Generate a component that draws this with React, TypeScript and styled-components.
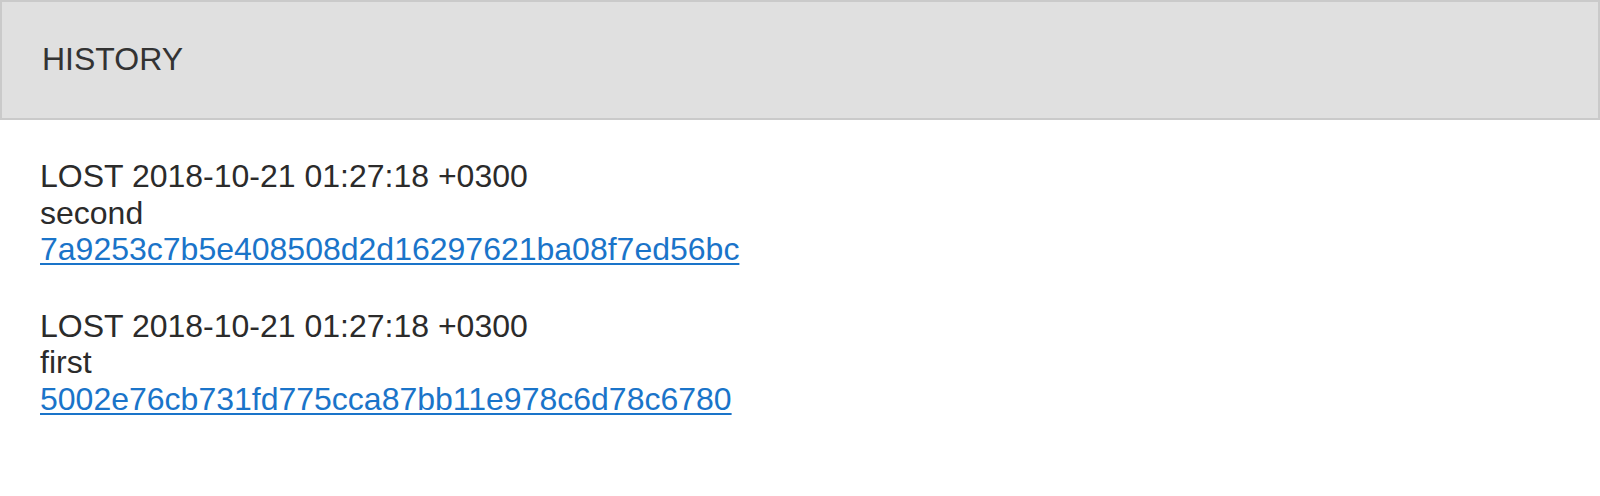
import React from "react";
import styled, { createGlobalStyle } from "styled-components";

const GlobalStyle = createGlobalStyle`
  html, body {
    margin: 0;
    padding: 0;
    background: #ffffff;
  }
  body {
    font-family: "Liberation Sans", Arial, Helvetica, sans-serif;
    color: #2b2b2b;
  }
`;

const Page = styled.div`
  width: 1600px;
  display: flex;
  flex-direction: column;
`;

const Header = styled.header`
  box-sizing: border-box;
  height: 120px;
  border: 2px solid #cacaca;
  background: #e0e0e0;
  padding: 39px 40px 40px;
  display: flex;
  align-items: flex-start;
`;

const Title = styled.h1`
  margin: 0;
  font-size: 32px;
  line-height: 37px;
  font-weight: 400;
  color: #333333;
  text-transform: uppercase;
`;

const List = styled.main`
  display: flex;
  flex-direction: column;
  gap: 40px;
  padding: 38px 40px 0;
`;

const Entry = styled.div`
  display: flex;
  flex-direction: column;
  align-items: flex-start;
  font-size: 32px;
  line-height: 36.5px;
  color: #2b2b2b;
`;

const Line = styled.div``;

const HashLink = styled.a`
  color: #1a74c9;
  text-decoration: underline;
  text-decoration-thickness: 2px;
  text-underline-offset: 3px;
`;

type Item = { status: string; date: string; message: string; hash: string };

const items: Item[] = [
  {
    status: "LOST",
    date: "2018-10-21 01:27:18 +0300",
    message: "second",
    hash: "7a9253c7b5e408508d2d16297621ba08f7ed56bc",
  },
  {
    status: "LOST",
    date: "2018-10-21 01:27:18 +0300",
    message: "first",
    hash: "5002e76cb731fd775cca87bb11e978c6d78c6780",
  },
];

export default function App() {
  return (
    <Page>
      <GlobalStyle />
      <Header>
        <Title>History</Title>
      </Header>
      <List>
        {items.map((it) => (
          <Entry key={it.hash}>
            <Line>
              {it.status} {it.date}
            </Line>
            <Line>{it.message}</Line>
            <HashLink href="#">{it.hash}</HashLink>
          </Entry>
        ))}
      </List>
    </Page>
  );
}
